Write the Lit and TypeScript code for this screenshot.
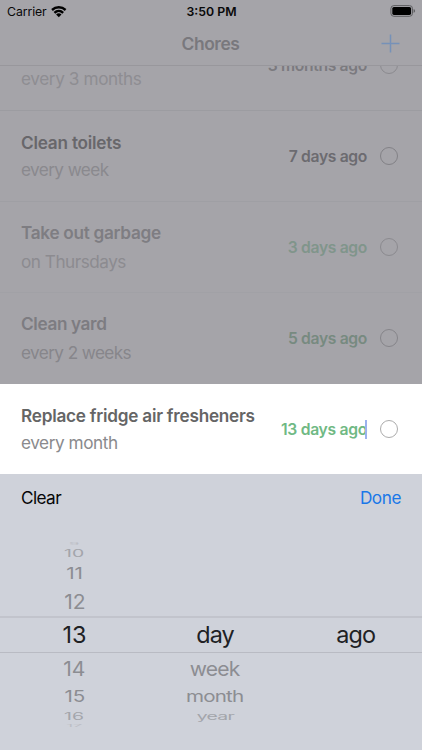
import { LitElement, html, css, svg } from "lit";
import { customElement, property } from "lit/decorators.js";
import { styleMap } from "lit/directives/style-map.js";

interface Chore {
  title: string;
  repeat: string;
  last: string;
  tone: string;
  titleTrack: number;
  repeatTrack: number;
  lastTrack: number;
}

const chores: Chore[] = [
  { title: "Change air filter", repeat: "every 3 months", last: "3 months ago", tone: "first", titleTrack: -0.25, repeatTrack: -0.4, lastTrack: -0.33 },
  { title: "Clean toilets", repeat: "every week", last: "7 days ago", tone: "due", titleTrack: -0.22, repeatTrack: -0.6, lastTrack: -0.35 },
  { title: "Take out garbage", repeat: "on Thursdays", last: "3 days ago", tone: "fresh", titleTrack: -0.3, repeatTrack: -0.5, lastTrack: -0.35 },
  { title: "Clean yard", repeat: "every 2 weeks", last: "5 days ago", tone: "fresh dim", titleTrack: -0.37, repeatTrack: -0.6, lastTrack: -0.35 },
  { title: "Replace fridge air fresheners", repeat: "every month", last: "13 days ago", tone: "active", titleTrack: -0.24, repeatTrack: -0.45, lastTrack: -0.3 },
];

const px = (n: number) => styleMap({ letterSpacing: `${n}px` });

@customElement("chore-row")
class ChoreRow extends LitElement {
  @property({ attribute: false }) chore!: Chore;

  static styles = css`
    :host { display: block; }
    .row {
      box-sizing: border-box; height: 91px; display: flex; align-items: center;
      padding: 0 24px 0 21px; border-bottom: 1px solid #9f9fa4;
      --title: #7e7d82; --repeat: #8c8b90; --last: #80958b; --ring: #8b8a8f;
    }
    .first { --repeat: #8e8d92; --last: #7b7a7f; border-bottom-color: #9c9ca1; }
    .due { --title: #68676b; --repeat: #8a898e; --last: #6c6b70; --ring: #828186; }
    .fresh { border-bottom-color: #a1a1a6; }
    .dim { --title: #7d7c81; --repeat: #87868b; --last: #778a80; --ring: #86858a; border-bottom-color: #a5a4a9; }
    .active {
      background: #fff; border: 0; height: 90px;
      --title: #656565; --repeat: #8a8a8d; --last: #70b984; --ring: #acacac;
    }
    .labels { flex: 1; display: flex; flex-direction: column; gap: 6px; }
    .fresh .labels { gap: 8px; }
    .title, .repeat { line-height: 21px; font-size: 17.2px; white-space: nowrap; }
    .title { font-weight: 600; color: var(--title); }
    .repeat { color: var(--repeat); }
    .last { font-size: 15.7px; font-weight: 600; color: var(--last); white-space: nowrap; display: flex; align-items: center; }
    .caret { width: 2px; height: 19px; margin-left: -2px; background: #9bb2ee; }
    .ring { box-sizing: border-box; width: 18px; height: 18px; margin-left: 13px; border: 1.5px solid var(--ring); border-radius: 50%; }
  `;

  render() {
    const c = this.chore;
    return html`<div class="row ${c.tone}">
      <div class="labels">
        <div class="title"><span style=${px(c.titleTrack)}>${c.title}</span></div>
        <div class="repeat"><span style=${px(c.repeatTrack)}>${c.repeat}</span></div>
      </div>
      <div class="last"><span style=${px(c.lastTrack)}>${c.last}</span>${c.tone === "active" ? html`<i class="caret"></i>` : ""}</div>
      <div class="ring"></div>
    </div>`;
  }
}

/* Slots of the wheel, top to bottom; the outer ones foreshorten as they turn away. */
const slots = ["edge", "far", "mid", "near", "now", "near", "mid", "far", "edge"];
const wheels = [
  ["9", "10", "11", "12", "13", "14", "15", "16", "17"],
  ["", "", "", "", "day", "week", "month", "year", ""],
  ["", "", "", "", "ago", "", "", "", ""],
];

@customElement("wheel-picker")
class WheelPicker extends LitElement {
  static styles = css`
    :host { display: block; overflow: hidden; position: relative; height: 230px; }
    .wheels { display: grid; grid-template-columns: repeat(3, 140.6px); padding: 22.4px 0 0 4.2px; }
    .wheel { display: flex; flex-direction: column; }
    .slot { display: flex; align-items: center; justify-content: center; font-size: 23.4px; line-height: 1; color: #8c8d92; }
    .slot span { flex: none; }
    .word { letter-spacing: -.9px; }
    .edge { height: 3.6px; color: #bcbec5; }
    .far { height: 15.4px; color: #a3a5ab; }
    .mid { height: 25.2px; }
    .near { height: 30.6px; }
    .now { height: 36px; color: #202124; }
    .edge span { transform: scale(.72, .13); }
    .far span { transform: scale(.83, .42); }
    .mid span { transform: scale(.88, .68); }
    .near span { transform: scale(.9, .85); }
    .band { box-sizing: border-box; position: absolute; left: 0; right: 0; top: 96px; height: 37px; border-top: 2px solid #c2c4cc; border-bottom: 1px solid #b9bbc3; }
  `;

  render() {
    return html`<div class="wheels">
        ${wheels.map((w, n) => html`<div class="wheel ${n ? "word" : ""}">
          ${w.map((t, i) => html`<div class="slot ${slots[i]}"><span>${t}</span></div>`)}
        </div>`)}
      </div>
      <div class="band"></div>`;
  }
}

const wifi = svg`<path d="M.2 4A11 11 0 0 1 15.4 4L13.8 5.9A8.8 8.8 0 0 0 1.8 5.9Z"/>
  <path d="M2.6 6.9A7.6 7.6 0 0 1 13 6.9L11.3 8.7A5.2 5.2 0 0 0 4.3 8.7Z"/>
  <path d="M5.1 9.6A3.9 3.9 0 0 1 10.5 9.6L7.8 12.2Z"/>`;

@customElement("app-root")
class AppRoot extends LitElement {
  static styles = css`
    :host {
      display: flex; flex-direction: column; width: 422px; height: 750px; overflow: hidden;
      background: #a5a4a9; font-family: Inter, "Liberation Sans", sans-serif;
    }
    .status { display: grid; grid-template-columns: 1fr auto 1fr; align-items: center; height: 22px; padding: 0 6px 0 7px; font-size: 12.3px; color: #09090a; }
    .carrier { display: flex; align-items: center; gap: 4px; letter-spacing: -.1px; }
    .clock { font-weight: 600; }
    .battery { justify-self: end; display: block; }
    .nav { box-sizing: border-box; display: grid; grid-template-columns: 1fr auto 1fr; align-items: center; height: 44px; padding: 0 22px 0 21px; border-bottom: 1px solid #98979c; }
    .heading { font-size: 17.4px; font-weight: 600; letter-spacing: -.4px; color: #79787d; }
    .add { justify-self: end; display: block; }
    .list { height: 408px; overflow: hidden; display: flex; flex-direction: column; justify-content: flex-end; }
    .list chore-row { flex: none; }
    .keyboard { flex: 1; background: #cfd2da; }
    .bar { display: flex; justify-content: space-between; align-items: center; height: 46px; padding: 0 21px; font-size: 17.2px; letter-spacing: -.6px; color: #060607; }
    .done { color: #1a78e8; letter-spacing: -.45px; }
  `;

  render() {
    return html`
      <div class="status">
        <div class="carrier"><span>Carrier</span><svg width="16" height="13" viewBox="0 0 16 13">${wifi}</svg></div>
        <div class="clock">3:50 PM</div>
        <svg class="battery" width="26" height="12" viewBox="0 0 26 12">
          <rect x=".9" y=".6" width="21.6" height="10.7" rx="3" fill="none" stroke="#5d5d60" />
          <rect x="2.3" y="2" width="18.8" height="7.9" rx="1.6" />
          <path d="M23.6 4.1q1.5.6 1.5 1.9t-1.5 1.9Z" fill="#5d5d60" />
        </svg>
      </div>
      <div class="nav">
        <span></span>
        <div class="heading">Chores</div>
        <svg class="add" width="19" height="19" viewBox="0 0 19 19"><path d="M9.5.5v18M.5 9.5h18" stroke="#7691b8" stroke-width="1.5" /></svg>
      </div>
      <div class="list">${chores.map((c) => html`<chore-row .chore=${c}></chore-row>`)}</div>
      <div class="keyboard">
        <div class="bar"><span>Clear</span><span class="done">Done</span></div>
        <wheel-picker></wheel-picker>
      </div>
    `;
  }
}
